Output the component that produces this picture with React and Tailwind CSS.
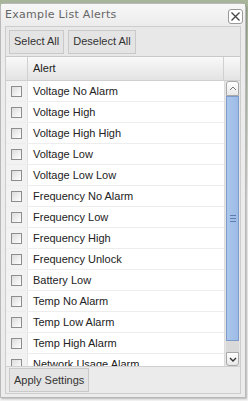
const alerts = [
  "Voltage No Alarm",
  "Voltage High",
  "Voltage High High",
  "Voltage Low",
  "Voltage Low Low",
  "Frequency No Alarm",
  "Frequency Low",
  "Frequency High",
  "Frequency Unlock",
  "Battery Low",
  "Temp No Alarm",
  "Temp Low Alarm",
  "Temp High Alarm",
  "Network Usage Alarm",
];

const Checkbox = () => (
  <div className="w-[11px] h-[11px] border border-[#8d8d8d] bg-gradient-to-br from-[#dcdcdc] to-[#ffffff]" />
);

const ToolButton = ({ children }) => (
  <div className="h-[24px] px-[4px] flex items-center border border-[#c9c9c9] bg-[#e4e4e4] text-[11px] text-[#333]">
    {children}
  </div>
);

const App = () => {
  return (
    <div
      className="w-[248px] h-[401px] bg-gradient-to-b from-[#a7b59a] via-[#f3f3f3] to-[#f3f3f3] pt-[3px] overflow-hidden"
      style={{ fontFamily: '"Liberation Sans", Arial, sans-serif' }}
    >
      <div className="w-[246px] h-[395px] border border-[#b9b9b9] rounded-t-[5px] bg-[#ececec] flex flex-col shadow-[1px_1px_2px_rgba(0,0,0,0.25)]">
        {/* title bar */}
        <div className="h-[21px] flex items-center justify-between pl-[4px] pr-[2px] bg-gradient-to-b from-[#f7f7f7] to-[#ececec]">
          <span
            className="text-[11px] text-[#666] tracking-[0.3px] mt-[2px]"
            style={{ fontFamily: '"DejaVu Sans", sans-serif' }}
          >
            Example List Alerts
          </span>
          <div className="w-[15px] h-[15px] mt-[4px] border border-[#9a9a9a] rounded-[3px] bg-white flex items-center justify-center">
            <svg width="11" height="11" viewBox="0 0 11 11">
              <path d="M1.5 1.5 L9.5 9.5 M9.5 1.5 L1.5 9.5" stroke="#444" strokeWidth="1.3" />
            </svg>
          </div>
        </div>

        {/* panel */}
        <div className="mx-[4px] mt-[1px] border border-[#cdcdcd] flex flex-col flex-1 mb-[3px]">
          <div className="h-[29px] flex items-center gap-[4px] pl-[3px] bg-[#e8e8e8]">
            <ToolButton>Select All</ToolButton>
            <ToolButton>Deselect All</ToolButton>
          </div>

          {/* grid */}
          <div className="border-t border-[#c8c8c8] flex flex-col">
            <div className="h-[24px] flex bg-gradient-to-b from-[#f9f9f9] to-[#e3e3e3] border-b border-[#cfcfcf] text-[11px] text-[#222]">
              <div className="w-[22px] border-r border-[#d0d0d0]" />
              <div className="flex-1 flex items-center pl-[5px] border-r border-[#d0d0d0]">Alert</div>
              <div className="w-[16px]" />
            </div>
            <div className="h-[285px] flex overflow-hidden">
              <div className="flex-1 flex flex-col bg-white">
                {alerts.map((name) => (
                  <div key={name} className="h-[21px] shrink-0 flex border-b border-[#ededed]">
                    <div className="w-[22px] shrink-0 bg-[#f2f2f2] flex items-center justify-center border-r border-[#e2e2e2]">
                      <Checkbox />
                    </div>
                    <div className="flex items-center pl-[5px] text-[11px] text-[#222] whitespace-nowrap">{name}</div>
                  </div>
                ))}
              </div>
              {/* scrollbar */}
              <div className="w-[16px] shrink-0 bg-[#e6e6e6] border-l border-[#dcdcdc] flex flex-col">
                <div className="h-[15px] shrink-0 mx-px border border-[#a8a8a8] rounded-t-[3px] bg-gradient-to-b from-white to-[#e8e8e8] flex items-center justify-center">
                  <svg width="8" height="5" viewBox="0 0 8 5">
                    <path d="M1 4 L4 1 L7 4" stroke="#777" strokeWidth="1" fill="none" />
                  </svg>
                </div>
                <div className="h-[245px] shrink-0 mx-px border border-[#7d9ccc] bg-gradient-to-r from-[#aac6ec] to-[#9dbbe6] flex items-center justify-center">
                  <div className="flex flex-col gap-[2px]">
                    <div className="w-[6px] h-px bg-[#5a7cae]" />
                    <div className="w-[6px] h-px bg-[#5a7cae]" />
                    <div className="w-[6px] h-px bg-[#5a7cae]" />
                  </div>
                </div>
                <div className="flex-1 bg-[#d9d9d9] mx-px" />
                <div className="h-[14px] shrink-0 mx-px border border-[#a8a8a8] rounded-b-[3px] bg-gradient-to-b from-white to-[#e8e8e8] flex items-center justify-center">
                  <svg width="8" height="5" viewBox="0 0 8 5">
                    <path d="M1 1 L4 4 L7 1" stroke="#333" strokeWidth="1.4" fill="none" />
                  </svg>
                </div>
              </div>
            </div>
          </div>

          {/* footer */}
          <div className="flex-1 flex items-center pl-[3px] border-t border-[#d0d0d0] bg-[#ebebeb]">
            <ToolButton>Apply Settings</ToolButton>
          </div>
        </div>
      </div>
    </div>
  );
};

export default App;
